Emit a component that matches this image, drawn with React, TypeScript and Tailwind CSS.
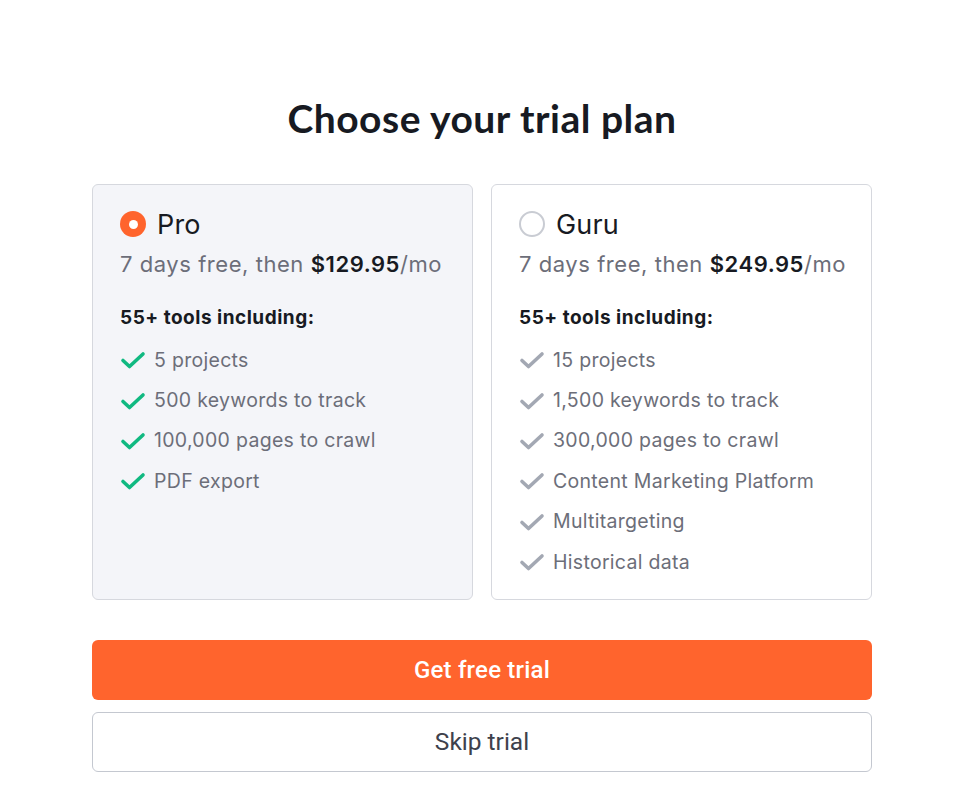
import React from 'react';

type Plan = {
  name: string;
  price: string;
  features: string[];
  selected: boolean;
};

const plans: Plan[] = [
  {
    name: 'Pro',
    price: '$129.95',
    features: ['5 projects', '500 keywords to track', '100,000 pages to crawl', 'PDF export'],
    selected: true,
  },
  {
    name: 'Guru',
    price: '$249.95',
    features: [
      '15 projects',
      '1,500 keywords to track',
      '300,000 pages to crawl',
      'Content Marketing Platform',
      'Multitargeting',
      'Historical data',
    ],
    selected: false,
  },
];

const Check: React.FC<{ active: boolean }> = ({ active }) => (
  <svg width="26" height="20" viewBox="0 0 26 20" fill="none" className="shrink-0">
    <path
      d="M3 10.5 L9.5 16.5 L23 4"
      stroke={active ? '#10b981' : '#a3a8b3'}
      strokeWidth="3.6"
      strokeLinecap="round"
      strokeLinejoin="round"
    />
  </svg>
);

const Radio: React.FC<{ checked: boolean }> = ({ checked }) =>
  checked ? (
    <span className="w-[26px] h-[26px] rounded-full bg-[#ff642d] flex items-center justify-center shrink-0">
      <span className="w-[9px] h-[9px] rounded-full bg-white" />
    </span>
  ) : (
    <span className="w-[26px] h-[26px] rounded-full border-2 border-[#c9ccd3] bg-white shrink-0" />
  );

const PlanCard: React.FC<{ plan: Plan }> = ({ plan }) => (
  <div
    className={`flex-1 min-w-0 rounded-md border border-[#d6d8de] pl-[27px] pr-[10px] pt-[23px] pb-[17px] ${
      plan.selected ? 'bg-[#f4f5f9]' : 'bg-white'
    }`}
  >
    <div className="flex items-center gap-[11px] h-[32px]">
      <Radio checked={plan.selected} />
      <span className="text-[27px] text-[#171a22] leading-none tracking-[0.2px]">{plan.name}</span>
    </div>
    <div className="mt-[9px] text-[22px] text-[#6c6e79] leading-[30px] tracking-[0.55px] whitespace-nowrap">
      7 days free, then <span className="font-semibold text-[#171a22]">{plan.price}</span>/mo
    </div>
    <div className="mt-[27px] text-[19px] font-bold text-[#171a22] leading-[24px] tracking-[0.5px]">
      55+ tools including:
    </div>
    <ul className="mt-[10px] flex flex-col">
      {plan.features.map((f) => (
        <li
          key={f}
          className="flex items-center gap-[8px] h-[40.4px] text-[19.5px] text-[#6c6e79] tracking-[0.3px] whitespace-nowrap"
        >
          <Check active={plan.selected} />
          <span>{f}</span>
        </li>
      ))}
    </ul>
  </div>
);

export default function App() {
  return (
    <div
      className="w-[975px] h-[794px] bg-white flex flex-col items-center pr-[11px]"
      style={{ fontFamily: 'Inter, "Noto Sans", sans-serif' }}
    >
      <h1
        className="mt-[96px] text-[39px] font-bold text-[#171a22] leading-[44px] tracking-[0.5px]"
        style={{ fontFamily: 'Lato, Inter, sans-serif' }}
      >
        Choose your trial plan
      </h1>
      <div className="mt-[44px] w-[780px] flex gap-[18px] items-stretch">
        {plans.map((p) => (
          <PlanCard key={p.name} plan={p} />
        ))}
      </div>
      <div className="mt-[40px] w-[780px] flex flex-col gap-[12px]">
        <button
          className="h-[60px] rounded-md bg-[#ff642d] text-white text-[24px] font-medium tracking-[0.2px]"
          style={{ fontFamily: 'Roboto, Inter, sans-serif' }}
        >
          Get free trial
        </button>
        <button
          className="h-[60px] rounded-md border border-[#c4c8d0] bg-white text-[#3e414c] text-[24.5px]"
          style={{ fontFamily: 'Roboto, Inter, sans-serif' }}
        >
          Skip trial
        </button>
      </div>
    </div>
  );
}
